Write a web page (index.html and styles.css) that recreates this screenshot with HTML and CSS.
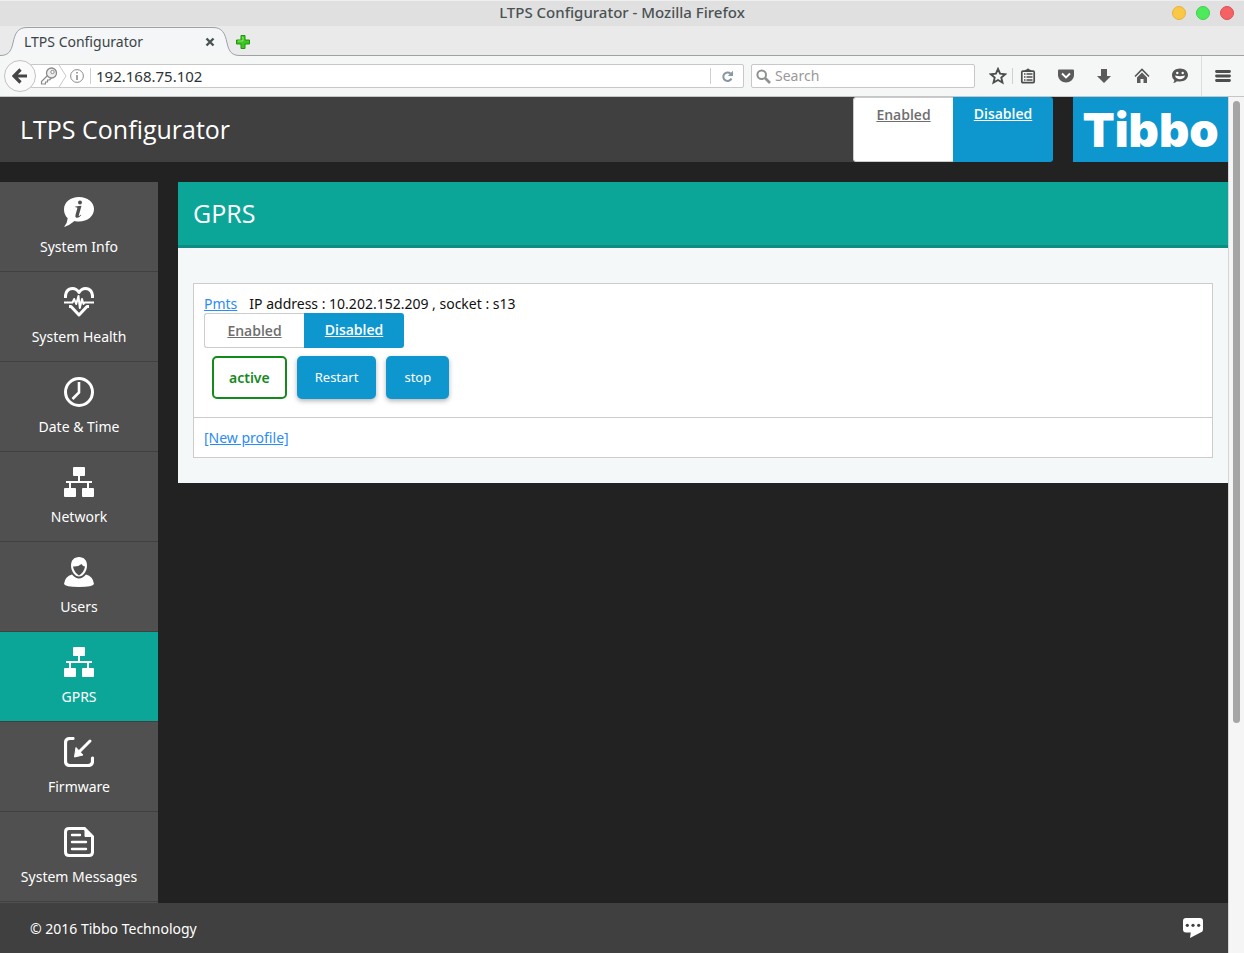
FILE: index.html
```
<!DOCTYPE html>
<html lang="en">
<head>
<meta charset="utf-8">
<title>LTPS Configurator</title>
<link rel="stylesheet" href="styles.css">
</head>
<body>
<svg class="defs" aria-hidden="true">
  <symbol id="net" viewBox="0 0 30 30"><rect x="9" y="0" width="12" height="9" rx="1"/><rect x="0" y="21" width="12" height="9" rx="1"/><rect x="18" y="21" width="12" height="9" rx="1"/><path d="M14 8h2v6h12v2h-3v6h-2v-6H7v6H5v-6H2v-2h12z"/></symbol>
</svg>
<div class="titlebar">
  <span class="window-title">LTPS Configurator - Mozilla Firefox</span>
  <div class="window-buttons">
    <button class="dot dot-min" aria-label="Minimize"></button>
    <button class="dot dot-max" aria-label="Maximize"></button>
    <button class="dot dot-close" aria-label="Close"></button>
  </div>
</div>
<div class="tabbar">
  <div class="tab">
    <svg class="tab-shape" width="240" height="30" viewBox="0 0 240 30" aria-hidden="true"><path d="M0 29.500C8 29.500 11 26 13 17C15 7 18 1.500 27 1.500H213C222 1.500 225 7 227 17C229 26 232 29.500 240 29.500V30H0Z" fill="#f5f6f7"/><path d="M0 29.500C8 29.500 11 26 13 17C15 7 18 1.500 27 1.500H213C222 1.500 225 7 227 17C229 26 232 29.500 240 29.500" fill="none" stroke="#9da2a8"/></svg>
    <span class="tab-label">LTPS Configurator</span>
    <button class="tab-close" aria-label="Close tab"><svg width="10" height="10" viewBox="0 0 10 10"><path d="M1.500 1.500l7 7M8.500 1.500l-7 7" stroke="#4a5254" stroke-width="2.400"/></svg></button>
  </div>
  <button class="new-tab" aria-label="New tab"><svg width="14" height="14" viewBox="0 0 14 14"><path d="M5 .5h4V5h4.500v4H9v4.500H5V9H.5V5H5z" fill="#3cc81e" stroke="#21920f"/><path d="M6 2h1v4H2" fill="none" stroke="#8be870"/></svg></button>
</div>
<div class="toolbar">
  <button class="back" aria-label="Back"><svg width="16" height="16" viewBox="0 0 16 16"><path d="M8.500 1.500L2 8l6.500 6.500M2.500 8H15" fill="none" stroke="#444" stroke-width="3.200"/></svg></button>
  <div class="urlbar">
    <svg class="key" width="36" height="22" viewBox="0 0 36 22" fill="none"><path d="M8.500 10.500L2.500 16.500v2.500h4v-2h2v-2h2l2-2" stroke="#8a8a8a" stroke-width="1.200"/><circle cx="12.500" cy="8" r="5" stroke="#8a8a8a" stroke-width="1.300" fill="#eee"/><circle cx="13.500" cy="7" r="1.700" stroke="#8a8a8a" fill="#fff"/><path d="M20 0l7 11-7 11" stroke="#c8c8c8"/></svg>
    <svg width="14" height="14" viewBox="0 0 14 14"><circle cx="7" cy="7" r="6.400" fill="none" stroke="#8c8c8c"/><path d="M6.200 3h1.600v1.600H6.200zM6.200 6h1.600v5H6.200z" fill="#8c8c8c"/></svg>
    <span class="sep"></span>
    <input class="url-input" type="text" value="192.168.75.102" aria-label="Address">
    <span class="sep"></span>
    <button class="reload" aria-label="Reload"><svg width="13" height="13" viewBox="0 0 13 13"><path d="M9.500 3.500A4.300 4.300 0 1 0 10.500 8.500" fill="none" stroke="#8797a3" stroke-width="2"/><path d="M12 .8V6H6.800z" fill="#8797a3"/></svg></button>
  </div>
  <div class="searchbar">
    <svg width="15" height="15" viewBox="0 0 15 15" fill="none" stroke="#8e9192"><circle cx="5.700" cy="5.700" r="4.300" stroke-width="2"/><path d="M9 9l5 5" stroke-width="2.600"/></svg>
    <input class="search-input" type="text" placeholder="Search" aria-label="Search">
  </div>
  <div class="tools">
    <button class="tool star" aria-label="Bookmark"><svg width="18" height="18" viewBox="0 0 18 18"><path d="M9 2l2.100 4.700 5.100.5-3.900 3.400 1.200 5L9 13l-4.500 2.600 1.200-5L1.800 7.200l5.100-.5z" fill="none" stroke="#4d4d4d" stroke-width="1.900"/></svg></button>
    <span class="sep"></span>
    <button class="tool list" aria-label="Bookmarks list"><svg width="16" height="16" viewBox="0 0 16 16"><path d="M4.500 3q0-1.500 2-1.500Q8-.5 9.500 1.500q2 0 2 1.500z" fill="#4d4d4d"/><rect x="1.800" y="3.200" width="12.400" height="11.400" rx="1" fill="none" stroke="#4d4d4d" stroke-width="1.700"/><path d="M4 6h1.500M6.500 6h6M4 9h1.500M6.500 9h6M4 12h1.500M6.500 12h6" stroke="#4d4d4d" stroke-width="1.400"/></svg></button>
    <button class="tool" aria-label="Pocket"><svg width="16" height="16" viewBox="0 0 16 16"><path d="M1 1.500h14q1 0 1 1V7c0 4.500-4 7.500-8 7.500S0 11.500 0 7V2.500q0-1 1-1z" fill="#5b5b5b"/><path d="M4 5.500l4 4 4-4" fill="none" stroke="#fff" stroke-width="1.900"/></svg></button>
    <button class="tool" aria-label="Downloads"><svg width="16" height="16" viewBox="0 0 16 16"><path d="M5 1h6v7h4l-7 7-7-7h4z" fill="#5b5b5b"/></svg></button>
    <button class="tool" aria-label="Home"><svg width="16" height="16" viewBox="0 0 16 16"><path d="M1 8.500l7-7 7 7" fill="none" stroke="#555" stroke-width="1.600"/><path d="M8 4.500l5 5V15H9.500v-4h-3v4H3V9.500z" fill="#5b5b5b"/></svg></button>
    <button class="tool" aria-label="Chat"><svg width="16" height="16" viewBox="0 0 16 16"><path d="M8 .5c4.500 0 8 2.800 8 6.500S12.500 13.500 8 13.500q-1.500 0-3-.3-1.500 1.600-4 1.800 1.500-1.200 1.300-3C.8 11 0 9 0 7 0 3.300 3.500.5 8 .5z" fill="#555"/><circle cx="5.300" cy="5" r="1.200" fill="#fff"/><circle cx="10.700" cy="5" r="1.200" fill="#fff"/><path d="M3 7.500q5 1.600 10 0c-.8 5-9.200 5-10 0z" fill="#fff"/></svg></button>
    <button class="tool menu" aria-label="Menu"><svg width="16" height="14" viewBox="0 0 16 14"><path d="M1.500 2.500h13M1.500 7h13M1.500 11.500h13" stroke="#4d4d4d" stroke-width="2.800" stroke-linecap="round"/></svg></button>
  </div>
</div>
<div class="viewport">
  <div class="page">
    <header class="page-header">
      <h1 class="brand">LTPS Configurator</h1>
      <div class="toggle">
        <a class="toggle-item" href="#">Enabled</a>
        <a class="toggle-item on" href="#">Disabled</a>
      </div>
      <a class="logo" href="#">Tibbo</a>
    </header>
    <div class="columns">
      <nav class="sidebar">
        <a class="nav-item" href="#"><svg width="30" height="30" viewBox="0 0 30 30"><path d="M15 0c8.500 0 15 5 15 12s-6.500 12.500-15 12.500q-2.500 0-4.500-.5Q6 28 0 30q3.500-4 3.700-8.700C1.300 19 0 16 0 12.500 0 5 6.500 0 15 0z" fill="#fff"/><circle cx="16" cy="5.500" r="2" fill="#505050"/><path d="M11 9.500l6.500-.8-2.800 10q0 .8 2-1l.5.600q-3.200 3.500-5.300 2.200-.9-.7-.4-2.400l1.900-7q.2-.9-1.900-.9z" fill="#505050"/></svg><span>System Info</span></a>
        <a class="nav-item" href="#"><svg width="30" height="30" viewBox="0 0 30 30" fill="none" stroke="#fff" stroke-linejoin="round"><path d="M1.500 11C1 5 4 1.500 8.500 1.500q4 0 6.500 4 2.500-4 6.500-4C26 1.500 29 5 28.500 11M5 19.500h2l8 8.500 8-8.500h2" stroke-width="3"/><path d="M0 15.500h8.500l1.700-3.500 2 5 2.300-8 1.300 12 2.200-9 1.500 5 1.200-1.500H30" stroke-width="2"/></svg><span>System Health</span></a>
        <a class="nav-item" href="#"><svg width="30" height="30" viewBox="0 0 30 30" fill="none" stroke="#fff"><circle cx="15" cy="15" r="13.500" stroke-width="3"/><path d="M15 5v10.500L8.500 22" stroke-width="2.600"/></svg><span>Date &amp; Time</span></a>
        <a class="nav-item" href="#"><svg width="30" height="30" fill="#fff"><use href="#net"/></svg><span>Network</span></a>
        <a class="nav-item" href="#"><svg width="30" height="30" viewBox="0 0 30 30"><path d="M8 17.500q7 8 14 0 7 1.500 8 9.500-1 3-15 3T0 27q1-8 8-9.500z" fill="#fff"/><path d="M15 0c5 0 8 3.500 8 8.500 0 6-4 11-8 11S7 14.500 7 8.500C7 3.500 10 0 15 0z" fill="#fff"/><path d="M9 9.500q5 .5 8.500-2.500 1.500 2.500 3.500 2.500-.8 5.500-6 9-5.200-3.500-6-9z" fill="#505050"/></svg><span>Users</span></a>
        <a class="nav-item current" href="#"><svg width="30" height="30" fill="#fff"><use href="#net"/></svg><span>GPRS</span></a>
        <a class="nav-item" href="#"><svg width="30" height="30" viewBox="0 0 30 30"><path d="M9 1.500H6Q1.500 1.500 1.500 6v18q0 4.500 4.500 4.500h18q4.500 0 4.500-4.500v-3" fill="none" stroke="#fff" stroke-width="3.200" stroke-linecap="round"/><path d="M26 4L15 15" stroke="#fff" stroke-width="3" stroke-linecap="round"/><path d="M12 10.500l7 7.500-8.500 2z" fill="#fff" stroke="#fff" stroke-linejoin="round"/></svg><span>Firmware</span></a>
        <a class="nav-item" href="#"><svg width="30" height="30" viewBox="0 0 30 30" fill="none" stroke="#fff"><path d="M5 1.500h15.500l8 8V25q0 3.500-3.500 3.500H5Q1.500 28.500 1.500 25V5Q1.500 1.500 5 1.500z" stroke-width="3"/><path d="M21 2v7.500h7z" fill="#fff"/><path d="M8 8h8M8 15h14M8 22h14" stroke-width="2.400" stroke-linecap="round"/></svg><span>System Messages</span></a>
      </nav>
      <main class="panel">
        <h2 class="panel-title">GPRS</h2>
        <div class="panel-body">
          <table class="profiles">
            <tr><td>
              <div class="profile-line"><a class="link" href="#">Pmts</a><span>IP address : 10.202.152.209 , socket : s13</span></div>
              <div class="toggle">
                <a class="toggle-item" href="#">Enabled</a>
                <a class="toggle-item on" href="#">Disabled</a>
              </div>
              <div class="actions">
                <span class="status">active</span>
                <button class="action">Restart</button>
                <button class="action">stop</button>
              </div>
            </td></tr>
            <tr><td><a class="link" href="#">[New profile]</a></td></tr>
          </table>
        </div>
      </main>
    </div>
    <footer class="page-footer">
      <span>© 2016 Tibbo Technology</span>
      <button class="feedback" aria-label="Feedback"><svg width="20" height="20" viewBox="0 0 20 20"><path d="M3 0h14q3 0 3 3v8q0 3-2.500 3.500L7 20l.8-5.500H3q-3 0-3-3V3q0-3 3-3z" fill="#fff"/><g fill="#404040"><circle cx="4.300" cy="7.300" r="1.600"/><circle cx="10" cy="7.300" r="1.600"/><circle cx="15.700" cy="7.300" r="1.600"/></g></svg></button>
    </footer>
  </div>
  <div class="scrollbar"><div class="thumb"></div></div>
</div>
</body>
</html>
```
FILE: styles.css
```
* { box-sizing: border-box; }
body { margin: 0; height: 100vh; display: flex; flex-direction: column; overflow: hidden; font: 14px/19px "Noto Sans", "Open Sans", sans-serif; background: #222; }
button { border: 0; padding: 0; margin: 0; background: none; font: inherit; display: flex; align-items: center; justify-content: center; }
input { border: 0; padding: 0; background: none; min-width: 0; font: inherit; outline: 0; }
svg { display: block; flex: none; }
.defs { position: absolute; width: 0; height: 0; }

.titlebar { position: relative; flex: none; height: 26px; display: flex; align-items: center; justify-content: center; background: #e0e0e0; border-top: 1px solid #efefef; font: 500 15px/24px "Noto Sans", sans-serif; color: #4a5254; }
.window-title { padding-bottom: 3px; }
.window-buttons { position: absolute; right: 10px; top: 5px; display: flex; gap: 10px; }
.dot { width: 14px; height: 14px; border-radius: 50%; }
.dot-min { background: #f9c846; border: 1px solid #e8b23a; }
.dot-max { background: #4eea5c; border: 1px solid #3dd04b; }
.dot-close { background: #f66164; border: 1px solid #dd4d51; }

.tabbar { flex: none; height: 30px; display: flex; align-items: center; background: #eaeaea; border-bottom: 1px solid #9fa1a3; }
.tab { position: relative; width: 235px; height: 30px; display: flex; align-items: center; justify-content: space-between; padding: 3px 20px 0 24px; font: 14px/20px "Noto Sans", sans-serif; color: #3b4446; }
.tab-shape { position: absolute; left: 0; top: 0; }
.tab-label, .tab-close { position: relative; }
.new-tab { width: 16px; height: 30px; padding-top: 2px; }

.toolbar { flex: none; height: 41px; display: flex; align-items: center; padding-left: 4px; background: #f5f6f6; border-bottom: 1px solid #c6c6c6; font: 14px/20px "Noto Sans", sans-serif; color: #3b4446; }
.back { flex: none; position: relative; width: 32px; height: 32px; border: 1px solid #c2c2c2; border-radius: 50%; background: #fafafa; }
.urlbar, .searchbar { height: 24px; display: flex; align-items: center; background: #fff; border: 1px solid #c8c8c8; border-radius: 2px; }
.urlbar { flex: 1; margin-left: -6px; }
.key { margin-left: 8px; margin-right: -5px; }
.sep { flex: none; width: 1px; height: 16px; background: #d0d0d0; }
.urlbar .sep { margin-left: 6px; }
.url-input { flex: 1; margin-left: 5px; color: #2e3436; font-size: 15px; }
.reload { width: 32px; }
.searchbar { width: 224px; margin-left: 7px; padding-left: 4px; }
.search-input { flex: 1; margin-left: 4px; }
.search-input::placeholder { color: #999; opacity: 1; }
.tools { flex: none; display: flex; align-items: center; }
.tool { width: 38px; height: 34px; }
.tool.star { width: 29px; margin-left: 8px; }
.tool.list { width: 30px; margin-right: 4px; }
.tool.menu { width: 43px; height: 40px; margin-left: 2px; border-left: 1px solid #ddd; }

.viewport { flex: 1; min-height: 0; display: flex; }
.page { flex: 1; min-width: 0; display: flex; flex-direction: column; }
.scrollbar { width: 16px; padding: 4px 3px 0 4px; background: #f5f5f5; border-left: 1px solid #d5d5d5; }
.thumb { width: 7px; height: 73%; border-radius: 4px; background: #a5a5a5; }

.page-header { flex: none; height: 65px; display: flex; }
.brand { flex: 1; margin: 0; padding-left: 20px; font-size: 25px; font-weight: 400; font-family: "Open Sans", sans-serif; line-height: 65px; color: #fff; background: #404040; }
.toggle { display: flex; width: 200px; min-height: 35px; }
.toggle-item { width: 50%; text-align: center; font-weight: 600; font-family: "Open Sans", sans-serif; line-height: 33px; color: #6e6e6e; background: #fff; border: 1px solid #ccc; border-right: 0; border-radius: 3px 0 0 3px; }
.toggle-item.on { color: #fff; line-height: 34px; background: #0e96cf; border: 0; border-radius: 0 3px 3px 0; }
.logo { width: 155px; margin-left: 20px; background: #0e96cf; color: #fff; font-family: Inter, sans-serif; font-size: 47px; font-weight: 900; line-height: 65px; text-align: center; text-decoration: none; }

.columns { flex: 1; min-height: 0; padding-top: 20px; display: flex; gap: 20px; align-items: flex-start; }
.sidebar { flex: none; width: 158px; height: 100%; overflow: hidden; background: #505050; }
.nav-item { height: 90px; padding-top: 15px; display: flex; flex-direction: column; align-items: center; gap: 10px; color: #fff; text-decoration: none; border-bottom: 1px solid #404040; }
.nav-item.current { background: #0ca699; }
.panel { flex: 1; background: #f4f8f9; }
.panel-title { margin: 0; padding: 0 15px; font-size: 25px; font-weight: 400; font-family: "Open Sans", sans-serif; line-height: 63px; color: #fff; background: #0ca699; border-bottom: 3px solid #0d8c82; }
.panel-body { padding: 35px 15px 25px; }
.profiles { width: 100%; border-collapse: collapse; background: #fff; }
.profiles td { padding: 10px; border: 1px solid #ccc; }
.profile-line { display: flex; gap: 12px; color: #111; }
.link { color: #2a8cf5; }
.actions { display: flex; gap: 10px; padding: 8px; }
.status { padding: 10px 15px; border: 2px solid #158a1c; border-radius: 5px; color: #158a1c; font-weight: 600; }
.action { padding: 0 18px; border-radius: 5px; color: #fff; background: #0e96cf; box-shadow: 0 2px 5px rgba(0, 0, 0, .3); font-size: 13px; }
.page-footer { flex: none; height: 50px; padding: 0 25px 0 30px; display: flex; align-items: center; justify-content: space-between; color: #fff; background: #404040; }
```
